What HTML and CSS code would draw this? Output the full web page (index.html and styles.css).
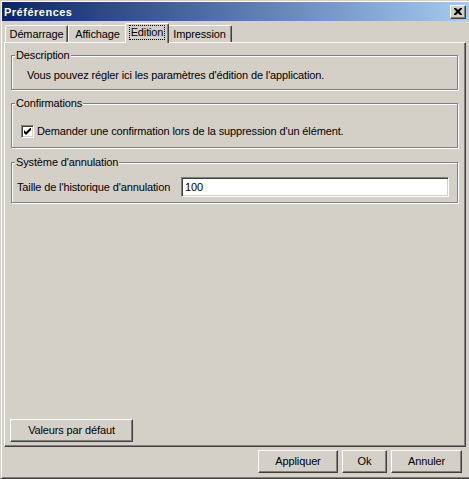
FILE: index.html
```html
<!DOCTYPE html>
<html lang="fr">
<head>
<meta charset="utf-8">
<title>Préférences</title>
<link rel="stylesheet" href="styles.css">
</head>
<body>
<div class="window">
  <div class="titlebar">
    <span class="title">Préférences</span>
    <div class="close-btn">
      <svg width="8" height="7" viewBox="0 0 8 7"><path d="M0 0h2l2 2 2-2h2v1l-2.5 2.5 2.5 2.5v1h-2l-2-2-2 2h-2v-1l2.5-2.5-2.5-2.5z" fill="#000"/></svg>
    </div>
  </div>
  <div class="body">
    <div class="tabs">
      <div class="tab tab-demarrage">Démarrage</div>
      <div class="tab tab-affichage">Affichage</div>
      <div class="tab tab-edition selected"><span class="focus">Edition</span></div>
      <div class="tab tab-impression">Impression</div>
    </div>
    <div class="pane">
      <div class="group group-desc">
        <span class="legend">Description</span>
        <div class="desc-text">Vous pouvez régler ici les paramètres d'édition de l'application.</div>
      </div>
      <div class="group group-confirm">
        <span class="legend">Confirmations</span>
        <div class="check-row">
          <span class="checkbox">
            <svg width="7" height="7" viewBox="0 0 7 7"><path d="M0 2v3l2 2 5-5v-2.9l-5 5z" fill="#000"/></svg>
          </span>
          <span class="check-label">Demander une confirmation lors de la suppression d'un élément.</span>
        </div>
      </div>
      <div class="group group-undo">
        <span class="legend">Système d'annulation</span>
        <div class="field-row">
          <span class="field-label">Taille de l'historique d'annulation</span>
          <div class="textbox">100</div>
        </div>
      </div>
      <div class="spacer"></div>
      <div class="button btn-defaults">Valeurs par défaut</div>
    </div>
    <div class="actions">
      <div class="button btn-apply">Appliquer</div>
      <div class="button btn-ok">Ok</div>
      <div class="button btn-cancel">Annuler</div>
    </div>
  </div>
</div>
</body>
</html>
```

FILE: styles.css
```css
* { box-sizing: border-box; }

html, body {
  margin: 0;
  padding: 0;
  background: #d4d0c8;
}

body {
  font-family: "Liberation Sans", Arial, sans-serif;
  font-size: 11px;
  letter-spacing: -0.13px;
  color: #000;
}

.window {
  width: 469px;
  height: 479px;
  background: #d4d0c8;
  border-top: 1px solid #d4d0c8;
  border-left: 1px solid #d4d0c8;
  border-bottom: 1px solid #404040;
  box-shadow: inset 1px 1px 0 #fff, inset 0 -1px 0 #808080;
  padding: 1px 0 1px 1px;
  display: flex;
  flex-direction: column;
}

.titlebar {
  height: 19px;
  background: linear-gradient(to right, #0a246a, #a6caf0);
  display: flex;
  align-items: center;
  justify-content: space-between;
  padding-left: 2px;
}

.title {
  color: #fff;
  font-weight: bold;
  font-size: 11px;
  letter-spacing: 0.5px;
}

.close-btn {
  width: 16px;
  height: 14px;
  margin-right: 3px;
  background: #d4d0c8;
  border: 1px solid;
  border-color: #fff #404040 #404040 #fff;
  box-shadow: inset -1px -1px 0 #808080;
  display: flex;
  align-items: center;
  justify-content: center;
  padding-bottom: 1px;
}

.close-btn svg { display: block; }

.body {
  flex: 1;
  display: flex;
  flex-direction: column;
  padding-top: 2px;
}

.tabs {
  display: flex;
  align-items: flex-end;
  height: 19px;
  margin-left: 3px;
}

.tab {
  height: 17px;
  background: #d4d0c8;
  border-top: 1px solid #fff;
  border-left: 1px solid #fff;
  border-right: 1px solid #404040;
  border-top-left-radius: 2px;
  border-top-right-radius: 2px;
  box-shadow: inset -1px 0 0 #808080;
  text-align: center;
  line-height: 15px;
  padding-top: 1px;
  white-space: nowrap;
}

.tab-demarrage { width: 63px; }
.tab-affichage { width: 59px; }
.tab-impression { width: 65px; }

.tab.selected {
  position: relative;
  z-index: 1;
  width: 44px;
  height: 20px;
  margin: 0 -2px -1px -2px;
  padding-top: 2px;
  line-height: 13px;
}

.focus {
  display: inline-block;
  outline: 1px dotted #000;
  outline-offset: 0;
  padding: 0 1px;
  line-height: 13px;
}

.pane {
  margin-left: 2px;
  width: 462px;
  height: 405px;
  border-top: 1px solid #fff;
  border-left: 1px solid #fff;
  border-right: 1px solid #404040;
  border-bottom: 1px solid #404040;
  box-shadow: inset -1px -1px 0 #808080;
  padding: 12px 7px 4px 6px;
  display: flex;
  flex-direction: column;
}

.group {
  position: relative;
  border: 1px solid #808080;
  box-shadow: 1px 1px 0 #fff, inset 1px 1px 0 #fff;
}

.legend {
  position: absolute;
  top: -7px;
  left: 3px;
  padding: 0 1px;
  line-height: 13px;
  background: #d4d0c8;
  white-space: nowrap;
}

.group-desc {
  height: 35px;
  padding: 13px 0 0 15px;
}

.desc-text { line-height: 13px; white-space: nowrap; }

.group-confirm {
  margin-top: 13px;
  height: 45px;
  padding: 21px 0 0 9px;
}

.check-row {
  display: flex;
  align-items: center;
  height: 13px;
  gap: 3px;
}

.checkbox {
  width: 13px;
  height: 13px;
  background: #fff;
  border: 1px solid;
  border-color: #808080 #fff #fff #808080;
  box-shadow: inset 1px 1px 0 #404040, inset -1px -1px 0 #d4d0c8;
  display: flex;
  align-items: center;
  justify-content: center;
  flex: none;
}

.checkbox svg { display: block; }

.check-label { line-height: 13px; white-space: nowrap; }

.group-undo {
  margin-top: 14px;
  height: 41px;
  padding: 14px 8px 0 5px;
}

.field-row {
  display: flex;
  align-items: center;
  height: 20px;
}

.field-label {
  width: 164px;
  white-space: nowrap;
  line-height: 13px;
}

.textbox {
  flex: 1;
  height: 20px;
  background: #fff;
  border: 1px solid;
  border-color: #808080 #fff #fff #808080;
  box-shadow: inset 1px 1px 0 #404040, inset -1px -1px 0 #d4d0c8;
  padding: 3px 0 0 3px;
  line-height: 13px;
}

.spacer { flex: 1; }

.button {
  height: 23px;
  background: #d4d0c8;
  border: 1px solid;
  border-color: #fff #404040 #404040 #fff;
  box-shadow: inset -1px -1px 0 #808080;
  display: flex;
  align-items: center;
  justify-content: center;
  white-space: nowrap;
  padding-bottom: 1px;
}

.btn-defaults {
  width: 123px;
  align-self: flex-start;
  margin-left: -1px;
}

.actions {
  display: flex;
  justify-content: flex-end;
  gap: 4px;
  margin-top: 3px;
  margin-right: 7px;
}

.btn-apply { width: 80px; }
.btn-ok { width: 45px; }
.btn-cancel { width: 71px; }
```
